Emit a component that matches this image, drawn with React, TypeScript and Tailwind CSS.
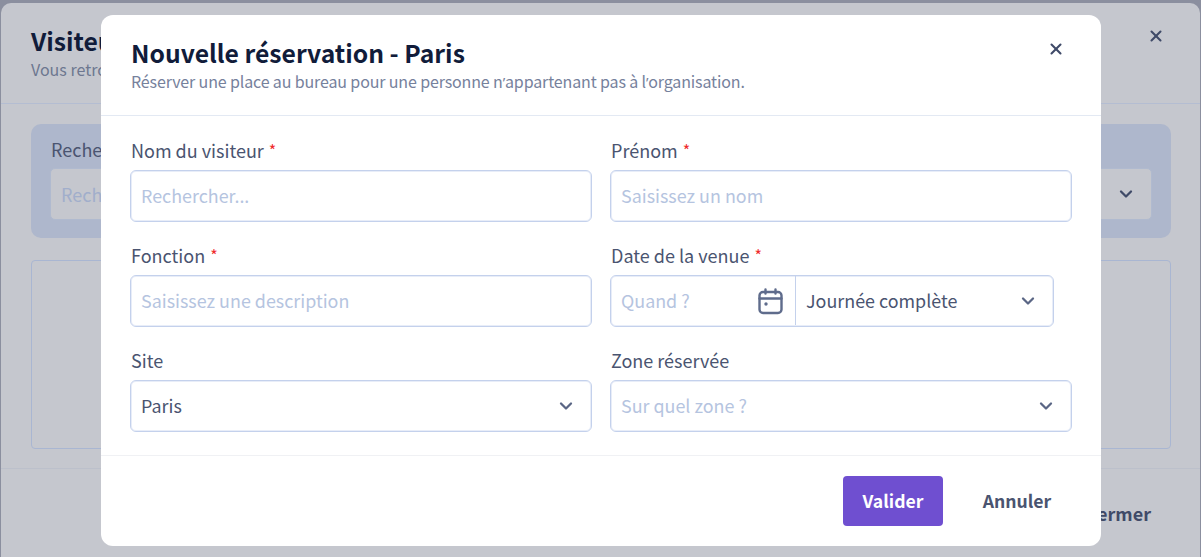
import { X, ChevronDown } from "lucide-react"

const font = { fontFamily: '"Noto Sans CJK SC", "Noto Sans", sans-serif' }

function Apos() {
  return <span className="font-['Noto_Sans'] text-[14px]">’</span>
}

function Label({ text, required }: { text: string; required?: boolean }) {
  return (
    <label className="block h-[30px] pl-[1px] text-[18px] leading-[20px] text-[#4a5470]">
      {text}
      {required && <span className="ml-[5px] align-[1px] text-[16px] text-[#ef2b2b]">*</span>}
    </label>
  )
}

function Field({ placeholder, value, chevron }: { placeholder?: string; value?: string; chevron?: boolean }) {
  return (
    <div className="flex h-[52px] items-center justify-between rounded-[6px] border border-[#c4d1ec] bg-white pb-[1px] pl-[10px] pr-[15px] text-[17.9px] shadow-[inset_0_0_0_1px_#e8edf8]">
      {value ? <span className="text-[#4a5470]">{value}</span> : <span className="text-[#b5c4e0]">{placeholder}</span>}
      {chevron && <ChevronDown size={20} strokeWidth={2.75} className="text-[#5a6685]" />}
    </div>
  )
}

function CalendarIcon() {
  return (
    <svg width="25" height="28" viewBox="0 0 25 28" fill="none" stroke="#5f6c8c" strokeWidth="2.4" strokeLinecap="round">
      <rect x="1.5" y="5" width="22" height="21" rx="3.5" />
      <path d="M1.5 11.5h22M7.5 2.5v4M17.5 2.5v4" />
      <circle cx="8" cy="17" r="1.7" fill="#5f6c8c" stroke="none" />
    </svg>
  )
}

export default function App() {
  return (
    <div style={font} className="relative h-[557px] w-[1201px] overflow-hidden bg-[#8b8f9f]">
      {/* Dialog behind */}
      <div className="absolute left-[1px] top-[3px] flex h-[560px] w-[1199px] flex-col rounded-tl-[10px] rounded-tr-[10px] bg-[#c5c7ce]">
        <div className="flex h-[101px] justify-between border-b border-[#b4bdd2] pl-[30px] pr-[35px] pt-[19px]">
          <div>
            <h2 className="text-[24.7px] font-bold leading-[36px] text-[#111c3a]">Visiteurs</h2>
            <p className="text-[16px] leading-[22px] text-[#6d7790]">Vous retrouverez ici les visiteurs</p>
          </div>
          <X size={18} strokeWidth={2.75} className="mt-[5px] text-[#3f4a68]" />
        </div>
        <div className="ml-[30px] mr-[29px] mt-[20px] h-[114px] rounded-[10px] bg-[#aeb7cc] px-[19px] pt-[13px]">
          <div className="pl-[1px] text-[18px] leading-[24px] text-[#4a5470]">Rechercher</div>
          <div className="mt-[7px] flex h-[52px] items-center justify-between rounded-[5px] border border-[#b0bacf] bg-[#c5c7ce] pl-[10px] pr-[15px] text-[18px] text-[#a1aecb]">
            <span>Rechercher</span>
            <ChevronDown size={20} strokeWidth={2.75} className="text-[#3f4a68]" />
          </div>
        </div>
        <div className="ml-[30px] mr-[29px] mt-[22px] h-[189px] rounded-[4px] border border-[#a9b6d2]" />
        <div className="mt-[19px] flex flex-1 justify-end border-t border-[#bcc0cb] pr-[49px] pt-[32px]">
          <span className="text-[18px] font-semibold leading-[24px] text-[#3f4a68]">Fermer</span>
        </div>
      </div>

      {/* Modal */}
      <div className="absolute left-[101px] top-[15px] flex h-[531px] w-[1000px] flex-col rounded-[12px] bg-white">
        <div className="flex h-[101px] justify-between border-b border-[#e3e9f3] pl-[30px] pr-[36px] pt-[20px]">
          <div>
            <h1 className="text-[24.7px] font-bold leading-[34px] text-[#111c3a]">Nouvelle réservation - Paris</h1>
            <p className="text-[16px] leading-[24px] tracking-[-0.135px] text-[#76819c]">
              Réserver une place au bureau pour une personne n<Apos />appartenant pas à l<Apos />organisation.
            </p>
          </div>
          <X size={18} strokeWidth={2.75} className="mt-[5px] text-[#3f4a68]" />
        </div>
        <div className="grid flex-1 grid-cols-2 content-start gap-x-[18px] gap-y-[23px] px-[29px] pt-[24px]">
          <div>
            <Label text="Nom du visiteur" required />
            <Field placeholder="Rechercher..." />
          </div>
          <div>
            <Label text="Prénom" required />
            <Field placeholder="Saisissez un nom" />
          </div>
          <div>
            <Label text="Fonction" required />
            <Field placeholder="Saisissez une description" />
          </div>
          <div>
            <Label text="Date de la venue" required />
            <div className="flex h-[52px] w-[444px] rounded-[6px] border border-[#c4d1ec] pb-[1px] text-[17.9px] shadow-[inset_0_0_0_1px_#e8edf8]">
              <div className="flex w-[185px] items-center justify-between border-r border-[#c4d1ec] pl-[10px] pr-[12px] text-[#b5c4e0]">
                <span>Quand ?</span>
                <CalendarIcon />
              </div>
              <div className="flex flex-1 items-center justify-between pl-[10px] pr-[15px] text-[#4a5470]">
                <span>Journée complète</span>
                <ChevronDown size={20} strokeWidth={2.75} className="text-[#5a6685]" />
              </div>
            </div>
          </div>
          <div>
            <Label text="Site" />
            <Field value="Paris" chevron />
          </div>
          <div>
            <Label text="Zone réservée" />
            <Field placeholder="Sur quel zone ?" chevron />
          </div>
        </div>
        <div className="flex h-[91px] items-center justify-end gap-[20px] border-t border-[#f0f1f4] pr-[30px]">
          <button className="h-[50px] w-[100px] rounded-[4px] bg-[#6f4fd0] text-[17.6px] font-semibold text-white">Valider</button>
          <button className="h-[50px] w-[108px] text-[17.6px] font-semibold text-[#4a5470]">Annuler</button>
        </div>
      </div>
    </div>
  )
}
